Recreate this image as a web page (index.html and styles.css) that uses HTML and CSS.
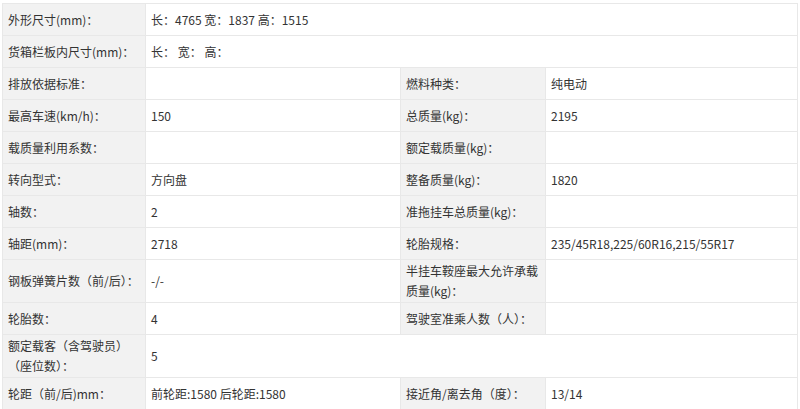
FILE: index.html
```html
<!DOCTYPE html>
<html lang="zh-CN">
<head>
<meta charset="utf-8">
<title>参数</title>
<link rel="stylesheet" href="styles.css">
</head>
<body>
<table class="spec">
  <colgroup>
    <col class="c-label1">
    <col class="c-val1">
    <col class="c-label2">
    <col class="c-val2">
  </colgroup>
  <tbody>
    <tr><td class="lbl">外形尺寸(mm)：</td><td colspan="3">长：4765 宽：1837 高：1515</td></tr>
    <tr><td class="lbl">货箱栏板内尺寸(mm)：</td><td colspan="3">长： 宽： 高：</td></tr>
    <tr><td class="lbl">排放依据标准：</td><td></td><td class="lbl">燃料种类：</td><td>纯电动</td></tr>
    <tr><td class="lbl">最高车速(km/h)：</td><td>150</td><td class="lbl">总质量(kg)：</td><td>2195</td></tr>
    <tr><td class="lbl">载质量利用系数：</td><td></td><td class="lbl">额定载质量(kg)：</td><td></td></tr>
    <tr><td class="lbl">转向型式：</td><td>方向盘</td><td class="lbl">整备质量(kg)：</td><td>1820</td></tr>
    <tr><td class="lbl">轴数：</td><td>2</td><td class="lbl">准拖挂车总质量(kg)：</td><td></td></tr>
    <tr><td class="lbl">轴距(mm)：</td><td>2718</td><td class="lbl">轮胎规格：</td><td>235/45R18,225/60R16,215/55R17</td></tr>
    <tr><td class="lbl">钢板弹簧片数（前/后）：</td><td>-/-</td><td class="lbl">半挂车鞍座最大允许承载质量(kg)：</td><td></td></tr>
    <tr><td class="lbl">轮胎数：</td><td>4</td><td class="lbl">驾驶室准乘人数（人）：</td><td></td></tr>
    <tr><td class="lbl">额定载客（含驾驶员）（座位数）：</td><td colspan="3">5</td></tr>
    <tr><td class="lbl">轮距（前/后)mm：</td><td>前轮距:1580 后轮距:1580</td><td class="lbl">接近角/离去角（度）：</td><td>13/14</td></tr>
  </tbody>
</table>
</body>
</html>
```
FILE: styles.css
```css
html, body {
  margin: 0;
  padding: 0;
  background: #ffffff;
}

body {
  font-family: "Microsoft YaHei", "Noto Sans CJK SC", sans-serif;
  font-size: 12px;
  color: #333333;
}

.spec {
  margin: 3px 0 0 2px;
  width: 796px;
  border-collapse: collapse;
  table-layout: fixed;
}

.c-label1 { width: 143px; }
.c-val1 { width: 255px; }
.c-label2 { width: 145px; }
.c-val2 { width: auto; }

.spec td {
  border: 1px solid #e8e8e8;
  height: 32px;
  box-sizing: border-box;
  padding: 1px 4px 1px 5px;
  line-height: 20px;
  vertical-align: middle;
  background: #ffffff;
}

.spec td.lbl {
  background: #f2f2f2;
}
```
